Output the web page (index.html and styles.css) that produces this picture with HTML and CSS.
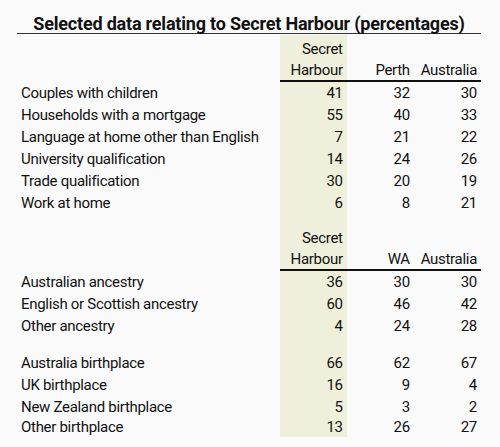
FILE: index.html
```html
<!DOCTYPE html>
<html lang="en">
<head>
    <meta charset="UTF-8">
    <meta name="viewport" content="width=device-width, initial-scale=1.0">
    <link rel="stylesheet" href="styles.css">
    <title>Secret Harbour</title>
</head>
<body>
    <div class="wrap">
        <h1 class="title">Selected data relating to Secret Harbour (percentages)</h1>
        <table class="data">
            <tr class="hd1"><td class="lbl"></td><td class="hl">Secret</td><td></td><td></td></tr>
            <tr class="hd2"><td class="lbl"></td><td class="hl">Harbour</td><td>Perth</td><td>Australia</td></tr>
            <tr><td class="lbl">Couples with children</td><td class="hl">41</td><td>32</td><td>30</td></tr>
            <tr><td class="lbl">Households with a mortgage</td><td class="hl">55</td><td>40</td><td>33</td></tr>
            <tr><td class="lbl">Language at home other than English</td><td class="hl">7</td><td>21</td><td>22</td></tr>
            <tr><td class="lbl">University qualification</td><td class="hl">14</td><td>24</td><td>26</td></tr>
            <tr><td class="lbl">Trade qualification</td><td class="hl">30</td><td>20</td><td>19</td></tr>
            <tr><td class="lbl">Work at home</td><td class="hl">6</td><td>8</td><td>21</td></tr>
            <tr class="gap1"><td class="lbl"></td><td class="hl"></td><td></td><td></td></tr>
            <tr class="hd1b"><td class="lbl"></td><td class="hl">Secret</td><td></td><td></td></tr>
            <tr class="hd2"><td class="lbl"></td><td class="hl">Harbour</td><td>WA</td><td>Australia</td></tr>
            <tr><td class="lbl">Australian ancestry</td><td class="hl">36</td><td>30</td><td>30</td></tr>
            <tr><td class="lbl">English or Scottish ancestry</td><td class="hl">60</td><td>46</td><td>42</td></tr>
            <tr><td class="lbl">Other ancestry</td><td class="hl">4</td><td>24</td><td>28</td></tr>
            <tr class="gap2"><td class="lbl"></td><td class="hl"></td><td></td><td></td></tr>
            <tr><td class="lbl">Australia birthplace</td><td class="hl">66</td><td>62</td><td>67</td></tr>
            <tr><td class="lbl">UK birthplace</td><td class="hl">16</td><td>9</td><td>4</td></tr>
            <tr><td class="lbl">New Zealand birthplace</td><td class="hl">5</td><td>3</td><td>2</td></tr>
            <tr class="last"><td class="lbl">Other birthplace</td><td class="hl">13</td><td>26</td><td>27</td></tr>
        </table>
    </div>
</body>
</html>
```
FILE: styles.css
```css
body{margin: 0;background: #fafafa;color: #111;font-family: Roboto, "Liberation Sans", sans-serif;}
.wrap{width: 464px;margin-left: 17px;}
.title{margin: 0;height: 33px;border-bottom: 1px solid #333;font-size: 18px;font-weight: bold;line-height: 47px;text-align: center;letter-spacing: -0.2px;white-space: nowrap;}
.data{width: 464px;border-collapse: separate;border-spacing: 0;font-size: 15px;letter-spacing: -0.3px;margin-top: 1px;}
.data td{height: 22px;padding: 0 4px 0 0;text-align: right;vertical-align: middle;line-height: 22px;width: 63px;}
.data td.lbl{text-align: left;padding: 0 0 0 4px;width: 258px;}
.data td.hl{background: #eef0dc;}
.hd1 td{height: 25px;vertical-align: bottom;}
.hd2 td{height: 20px;line-height: 20px;border-bottom: 2px solid #111;}
.hd2 td.lbl{border-bottom: none;padding-bottom: 2px;}
.gap1 td{height: 13px;}
.gap2 td{height: 15px;}
.last td{height: 19px;line-height: 19px;}
```
